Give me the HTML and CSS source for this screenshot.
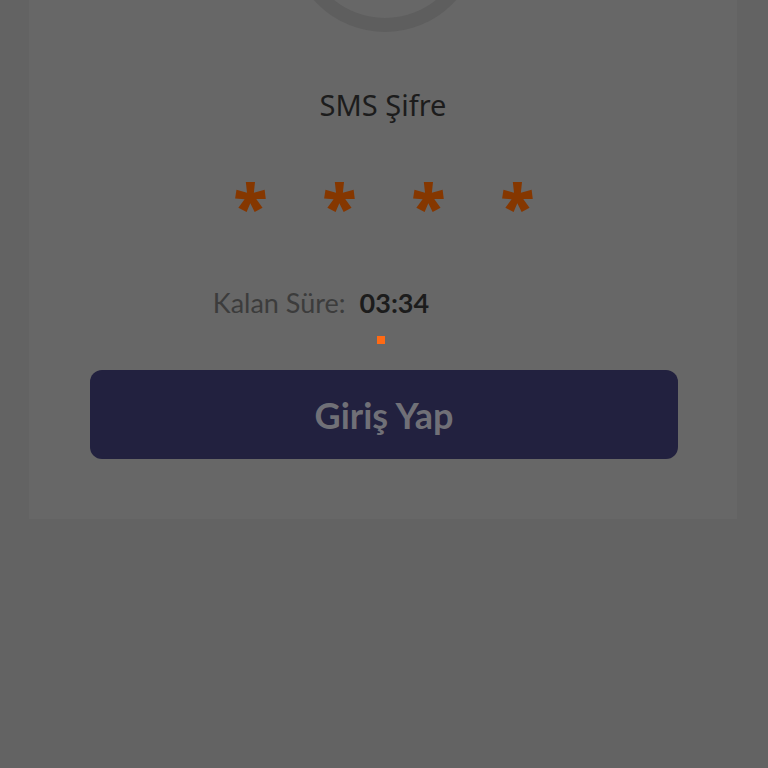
FILE: index.html
```html
<!DOCTYPE html>
<html lang="tr">

<head>
    <meta charset="UTF-8" />
    <meta name="viewport" content="width=device-width, initial-scale=1.0" />
    <title>SMS Şifre</title>
    <link rel="stylesheet" href="styles.css">
</head>

<body>
    <div class="kart">
        <div class="halka"></div>

        <h1 class="baslik">SMS Şifre</h1>

        <div class="sifre">
            <span>*</span>
            <span>*</span>
            <span>*</span>
            <span>*</span>
        </div>

        <div class="sure">
            <span class="sure-etiket">Kalan Süre:</span>
            <span class="sure-deger">03:34</span>
        </div>

        <div class="nokta"></div>

        <button class="btn-giris">Giriş Yap</button>
    </div>
</body>

</html>
```

FILE: styles.css
```css
html,
body {
    margin: 0;
    padding: 0;
    background: #636363;
    height: 768px;
    overflow: hidden;
    font-family: 'Lato', 'Noto Sans', sans-serif;
}

.kart {
    margin: 0 31px 0 29px;
    height: 519px;
    background: #676767;
    display: flex;
    flex-direction: column;
    align-items: center;
}

.halka {
    width: 162px;
    height: 162px;
    margin-top: -158px;
    margin-left: 4px;
    border: 14px solid #5e5e5e;
    border-radius: 50%;
    flex-shrink: 0;
}

.baslik {
    margin: 53px 0 0;
    font-family: 'Noto Sans', sans-serif;
    font-weight: 400;
    font-size: 29px;
    line-height: 40px;
    color: #1c1c1c;
}

.sifre {
    display: flex;
    gap: 55px;
    margin-top: 49px;
    margin-left: 2px;
}

.sifre span {
    width: 34px;
    text-align: center;
    font-family: 'Open Sans', sans-serif;
    font-weight: 800;
    font-size: 62px;
    line-height: 62px;
    height: 51px;
    color: #853700;
}

.sure {
    display: flex;
    gap: 14px;
    margin-top: 62px;
    margin-right: 124px;
    font-size: 27px;
    line-height: 32px;
}

.sure-etiket {
    color: #3c3c3c;
}

.sure-deger {
    font-weight: 700;
    color: #1c1c1c;
}

.nokta {
    width: 8px;
    height: 8px;
    margin-top: 17px;
    margin-left: -4px;
    background: #ff6a14;
}

.btn-giris {
    margin-top: 26px;
    width: 588px;
    height: 89px;
    margin-left: 2px;
    border: none;
    border-radius: 12px;
    background: #22213f;
    color: #707077;
    font-family: 'Lato', sans-serif;
    font-weight: 700;
    font-size: 36px;
}
```
